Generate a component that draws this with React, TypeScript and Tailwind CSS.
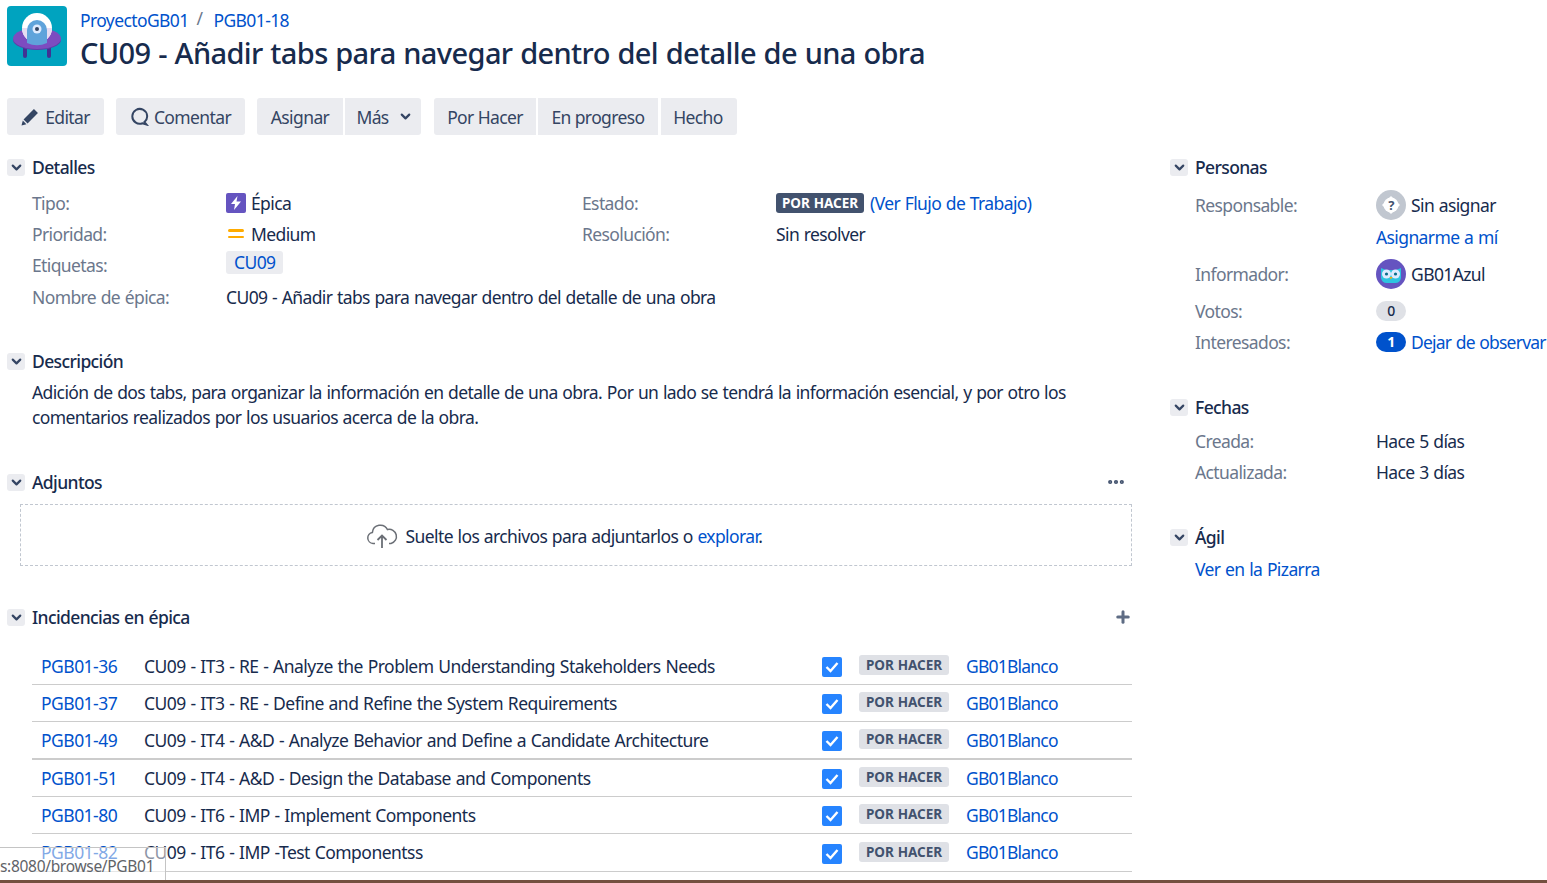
import { ChevronDown, Ellipsis, Plus } from 'lucide-react'

const issues = [
  { key: 'PGB01-36', name: 'CU09 - IT3 - RE - Analyze the Problem Understanding Stakeholders Needs', row: 'h-[37px] border-b' },
  { key: 'PGB01-37', name: 'CU09 - IT3 - RE - Define and Refine the System Requirements', row: 'h-[37px] border-b' },
  { key: 'PGB01-49', name: 'CU09 - IT4 - A&D - Analyze Behavior and Define a Candidate Architecture', row: 'h-[38px] border-b-2' },
  { key: 'PGB01-51', name: 'CU09 - IT4 - A&D - Design the Database and Components', row: 'h-[37px] border-b' },
  { key: 'PGB01-80', name: 'CU09 - IT6 - IMP - Implement Components', row: 'h-[37px] border-b' },
  { key: 'PGB01-82', name: 'CU09 - IT6 - IMP -Test Componentss', row: 'h-[38px] border-b' },
]

function SectionHeader({ title, right }: { title: string; right?: React.ReactNode }) {
  return (
    <div className="flex h-[20px] items-center">
      <span className="flex h-[17px] w-[18px] items-center justify-center rounded-[3px] bg-[#ebecf0] text-[#344563]">
        <ChevronDown size={15} strokeWidth={3.5} />
      </span>
      <h2 className="ml-[7px] text-[17.5px] font-medium text-[#172b4d]">{title}</h2>
      {right && <div className="ml-auto">{right}</div>}
    </div>
  )
}

function ActionButton({ children, className = '' }: { children: React.ReactNode; className?: string }) {
  return (
    <button className={`flex h-[37px] items-center justify-center bg-[#ebecf0] text-[17.5px] text-[#344563] ${className}`}>
      {children}
    </button>
  )
}

function UploadCloud() {
  return (
    <svg width="32" height="26" viewBox="0 0 32 26" fill="none" stroke="#6b6f76" strokeWidth="1.5">
      <path d="M9 20.5H7a5.6 5.6 0 0 1-.6-11.1A8 8 0 0 1 21.5 6.6 6.9 6.9 0 0 1 25 20.5h-2" />
      <path d="M16 25V12.5M11.5 17l4.5-4.5 4.5 4.5" strokeWidth="1.8" />
    </svg>
  )
}

function ProjectLogo() {
  return (
    <svg width="60" height="60" viewBox="0 0 60 60" className="shrink-0">
      <rect width="60" height="60" rx="4" fill="#00a3bf" />
      <rect x="16" y="40" width="4" height="12" rx="2" fill="#403294" />
      <rect x="40" y="40" width="4" height="12" rx="2" fill="#403294" />
      <ellipse cx="30" cy="34" rx="24" ry="10" fill="#5e3fa8" />
      <ellipse cx="30" cy="32.5" rx="24" ry="10.5" fill="#7d4cc0" />
      <circle cx="30" cy="22" r="15" fill="#ffffff" />
      <path d="M15 22a15 15 0 0 0 30 0z" fill="#e6dcf2" />
      <path d="M20 37V24a10 10 0 0 1 20 0v13a24 24 0 0 1-20 0z" fill="#5fa3db" />
      <circle cx="30" cy="23" r="4.5" fill="#deebff" />
      <circle cx="30" cy="23" r="2" fill="#344563" />
    </svg>
  )
}

function OwlAvatar() {
  return (
    <svg width="30" height="30" viewBox="0 0 30 30" className="shrink-0">
      <circle cx="15" cy="15" r="15" fill="#6554c0" />
      <path d="M5 9l5 2h10l5-2v10a6 6 0 0 1-6 5h-8a6 6 0 0 1-6-5z" fill="#2cc4e0" />
      <circle cx="10.5" cy="15" r="4.5" fill="#deebff" />
      <circle cx="19.5" cy="15" r="4.5" fill="#deebff" />
      <circle cx="10.5" cy="15" r="1.6" fill="#0a6e8a" />
      <circle cx="19.5" cy="15" r="1.6" fill="#0a6e8a" />
      <path d="M13.6 18h2.8L15 20.5z" fill="#ffab00" />
    </svg>
  )
}

function UnknownAvatar() {
  return (
    <svg width="30" height="30" viewBox="0 0 30 30" className="shrink-0">
      <circle cx="15" cy="15" r="15" fill="#c1c7d0" />
      <path d="M15 6l9 9-9 9-9-9z" fill="#ffffff" />
      <circle cx="15" cy="15" r="7.5" fill="#ffffff" />
      <text x="15" y="19.5" textAnchor="middle" fontSize="13" fontWeight="700" fill="#42526e">?</text>
    </svg>
  )
}

function Row({ label, children, className = '' }: { label: string; children: React.ReactNode; className?: string }) {
  return (
    <div className={`flex h-[31px] items-center ${className}`}>
      <span className="w-[194px] shrink-0 text-[#6b778c]">{label}</span>
      <div className="flex items-center whitespace-nowrap">{children}</div>
    </div>
  )
}

function SideRow({ label, children, className = '' }: { label: string; children: React.ReactNode; className?: string }) {
  return (
    <div className={`flex items-center whitespace-nowrap ${className}`}>
      <span className="w-[181px] shrink-0 text-[#6b778c]">{label}</span>
      {children}
    </div>
  )
}

export default function App() {
  return (
    <div className="relative h-[883px] w-[1547px] overflow-hidden bg-white font-['Noto_Sans','Open_Sans',sans-serif] text-[17.5px] leading-[24px] tracking-[-0.035em] text-[#172b4d] [word-spacing:0.7px]">
      {/* Header */}
      <header className="flex pl-[7px] pt-[6px]">
        <ProjectLogo />
        <div className="ml-[13px]">
          <div className="flex h-[27px] items-center text-[#0052cc]">
            <a>ProyectoGB01</a>
            <span className="ml-[8px] mr-[11px] -mt-[4px] text-[#6b778c]">/</span>
            <a>PGB01-18</a>
          </div>
          <h1 className="mt-px whitespace-nowrap text-[29px] font-medium leading-[38px] text-[#172b4d]">CU09 - Añadir tabs para navegar dentro del detalle de una obra</h1>
        </div>
      </header>

      {/* Toolbar */}
      <div className="mt-[26px] flex pl-[7px]">
        <ActionButton className="w-[97px] gap-[6px] rounded-[3px]">
          <svg width="18" height="18" viewBox="0 0 17 17"><path d="M12.2 1l3.8 3.8-9.8 9.8-3.8-3.8z" fill="#344563" /><path d="M1.7 11.9l3.4 3.4-4.6 1.2z" fill="#344563" /></svg>
          Editar
        </ActionButton>
        <ActionButton className="ml-[12px] w-[129px] gap-[5px] rounded-[3px]">
          <svg width="19" height="19" viewBox="0 0 19 19" fill="none" stroke="#344563" strokeWidth="2"><path d="M14.5 15a7.4 7.4 0 1 0-2 1.2l4 1.3z" /></svg>
          Comentar
        </ActionButton>
        <ActionButton className="ml-[12px] w-[86px] rounded-l-[3px]">Asignar</ActionButton>
        <ActionButton className="ml-[2px] w-[76px] gap-[9px] rounded-r-[3px] pl-[3px]">
          Más
          <ChevronDown size={15} strokeWidth={3.5} />
        </ActionButton>
        <ActionButton className="ml-[13px] w-[102px] rounded-l-[3px]">Por Hacer</ActionButton>
        <ActionButton className="ml-[2px] w-[120px]">En progreso</ActionButton>
        <ActionButton className="ml-[3px] w-[76px] rounded-r-[3px] pr-[2px]">Hecho</ActionButton>
      </div>

      <div className="mt-[22px] flex">
        {/* Main column */}
        <main className="ml-[7px] w-[1125px] shrink-0">
          <SectionHeader title="Detalles" />
          <div className="ml-[25px] mt-[10px] flex">
            <div className="flex w-[550px] flex-col">
              <Row label="Tipo:">
                <span className="flex h-[20px] w-[20px] items-center justify-center rounded-[2px] bg-[#6554c0]">
                  <svg width="12" height="14" viewBox="0 0 12 14"><path d="M7.5 0L1 8h4l-1 6 7-8.5H6.5z" fill="#fff" /></svg>
                </span>
                <span className="ml-[5px]">Épica</span>
              </Row>
              <Row label="Prioridad:">
                <span className="flex w-[20px] flex-col gap-[4px] px-[2px]">
                  <span className="h-[2.5px] rounded bg-[#ffab00]" />
                  <span className="h-[2.5px] rounded bg-[#ffab00]" />
                </span>
                <span className="ml-[5px]">Medium</span>
              </Row>
              <Row label="Etiquetas:">
                <span className="-mt-[4px] rounded-[3px] bg-[#ebecf0] px-[8px] leading-[23px] text-[#0052cc]">CU09</span>
              </Row>
            </div>
            <div className="flex flex-col">
              <Row label="Estado:">
                <span className="rounded-[3px] bg-[#42526e] px-[6px] text-[13.5px] font-bold leading-[20px] tracking-[-0.005em] text-white">POR HACER</span>
                <span className="ml-[6px] text-[#0052cc]">(Ver Flujo de Trabajo)</span>
              </Row>
              <Row label="Resolución:">
                <span>Sin resolver</span>
              </Row>
            </div>
          </div>
          <Row label="Nombre de épica:" className="ml-[25px] mt-[1px]">
            <span>CU09 - Añadir tabs para navegar dentro del detalle de una obra</span>
          </Row>

          <div className="mt-[39px]">
            <SectionHeader title="Descripción" />
          </div>
          <p className="ml-[25px] mt-[9px] w-[1075px] leading-[25px]">
            Adición de dos tabs, para organizar la información en detalle de una obra. Por un lado se tendrá la información esencial, y por otro los comentarios realizados por los usuarios acerca de la obra.
          </p>

          <div className="mt-[42px]">
            <SectionHeader title="Adjuntos" right={<Ellipsis size={20} strokeWidth={3} className="mr-[6px] text-[#42526e]" />} />
          </div>
          <div className="ml-[13px] mt-[12px] flex h-[62px] items-center justify-center border border-dashed border-[#c1c7d0] pr-[24px] pt-px">
            <UploadCloud />
            <span className="ml-[8px]">Suelte los archivos para adjuntarlos o <a className="text-[#0052cc]">explorar</a>.</span>
          </div>

          <div className="mt-[41px]">
            <SectionHeader title="Incidencias en épica" right={<Plus size={18} strokeWidth={4} className="text-[#5e6c84]" />} />
          </div>
          <div className="ml-[25px] mt-[21px] tracking-[-0.03em]">
            {issues.map((issue) => (
              <div key={issue.key} className={`flex items-center border-[#cccccc] pb-[1px] ${issue.row}`}>
                <a className="ml-[9px] w-[103px] shrink-0 text-[#0052cc]">{issue.key}</a>
                <span className="w-[678px] shrink-0 whitespace-nowrap">{issue.name}</span>
                <span className="mt-[3px] flex h-[20px] w-[20px] items-center justify-center rounded-[2px] bg-[#2684ff]">
                  <svg width="14" height="12" viewBox="0 0 14 12" fill="none" stroke="#fff" strokeWidth="2.4"><path d="M1.5 6l4 4 7-8" /></svg>
                </span>
                <span className="-mt-[1px] ml-[17px] rounded-[3px] bg-[#dfe1e6] px-[7px] text-[13.5px] font-bold leading-[20px] tracking-[-0.005em] text-[#42526e]">POR HACER</span>
                <a className="ml-[17px] tracking-[-0.045em] text-[#0052cc]">GB01Blanco</a>
              </div>
            ))}
          </div>
        </main>

        {/* Side column */}
        <aside className="ml-[38px] w-[377px] shrink-0">
          <SectionHeader title="Personas" />
          <div className="ml-[25px]">
            <SideRow label="Responsable:" className="mt-[13px] h-[30px]">
              <UnknownAvatar />
              <span className="ml-[5px]">Sin asignar</span>
            </SideRow>
            <a className="ml-[181px] mt-[5px] block text-[#0052cc]">Asignarme a mí</a>
            <SideRow label="Informador:" className="mt-[10px] h-[30px]">
              <OwlAvatar />
              <span className="ml-[5px]">GB01Azul</span>
            </SideRow>
            <SideRow label="Votos:" className="mt-[10px] h-[24px]">
              <span className="flex h-[20px] w-[30px] shrink-0 items-center justify-center rounded-full bg-[#dfe1e6] text-[14px] font-medium">0</span>
            </SideRow>
            <SideRow label="Interesados:" className="mt-[7px] h-[24px]">
              <span className="flex h-[20px] w-[30px] shrink-0 items-center justify-center rounded-full bg-[#0052cc] text-[14px] font-bold text-white">1</span>
              <a className="ml-[5px] tracking-[-0.045em] text-[#0052cc]">Dejar de observar</a>
            </SideRow>
          </div>

          <div className="mt-[43px]">
            <SectionHeader title="Fechas" />
          </div>
          <div className="ml-[25px]">
            <SideRow label="Creada:" className="mt-[8px] h-[31px]">
              <span>Hace 5 días</span>
            </SideRow>
            <SideRow label="Actualizada:" className="h-[31px]">
              <span>Hace 3 días</span>
            </SideRow>
          </div>

          <div className="mt-[40px]">
            <SectionHeader title="Ágil" />
          </div>
          <a className="ml-[25px] mt-[10px] block text-[#0052cc]">Ver en la Pizarra</a>
        </aside>
      </div>

      {/* Browser status tooltip + window edge */}
      <div className="absolute bottom-0 left-0 h-[36px] w-[166px] overflow-hidden whitespace-nowrap border-r border-t border-[#c4c4c4] bg-white/50 text-[15.5px] tracking-[-0.02em] text-[#5f6368]">
        <span className="mt-[6px] block">s:8080/browse/PGB01</span>
      </div>
      <div className="absolute bottom-0 left-0 h-[3px] w-full bg-[#74503f]" />
    </div>
  )
}
